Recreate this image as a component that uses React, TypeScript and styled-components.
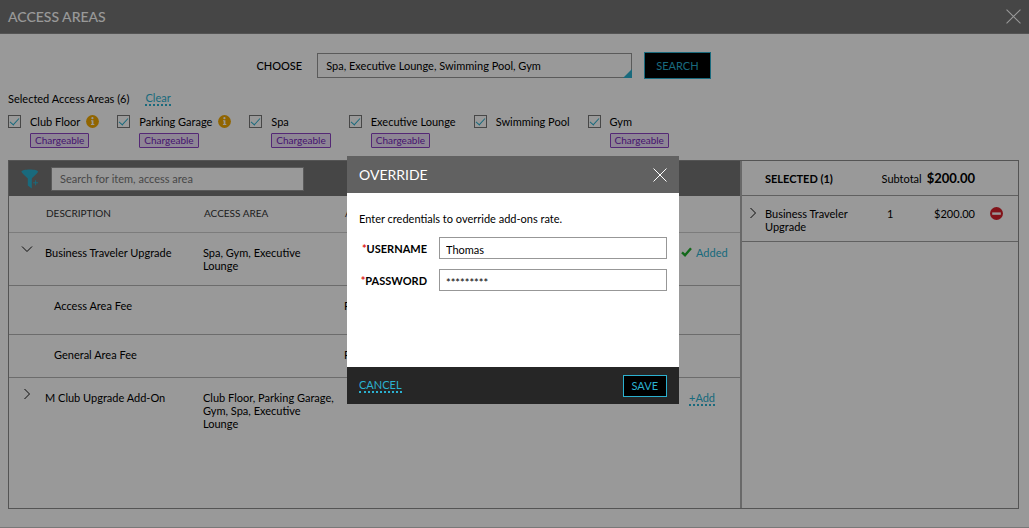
import React from "react";
import styled, { createGlobalStyle } from "styled-components";

const teal = "#2bb1d0";

const GlobalStyle = createGlobalStyle`
  *, *::before, *::after { box-sizing: border-box; }
  body {
    margin: 0;
    background: #fff;
    color: #000;
    font: 400 11px/13px Lato, "Liberation Sans", sans-serif;
  }
  button, input { font: inherit; color: inherit; border-radius: 0; }
  h1, h2, p, ul { margin: 0; padding: 0; }
`;

const Page = styled.div`
  display: flex;
  flex-direction: column;
  min-height: 100vh;
  border-bottom: 1px solid #c8c8c8;
`;

const TitleBar = styled.header`
  display: flex;
  align-items: center;
  justify-content: space-between;
  height: 34px;
  padding: 0 8px;
  background: #757575;
  border-bottom: 1px solid #8c8c8c;
  color: #fff;
`;

const PageTitle = styled.h1`
  font-size: 14px;
  line-height: 16px;
  font-weight: 500;
`;

const IconButton = styled.button`
  display: flex;
  padding: 0;
  border: 0;
  background: none;
  cursor: pointer;
`;

const LinkText = styled.a`
  color: ${teal};
  text-decoration: none;
  border-bottom: 2px dotted ${teal};
  line-height: 13px;
`;

const OutlineButton = styled.button<{ $wide?: boolean }>`
  height: ${(p) => (p.$wide ? 27 : 22)}px;
  padding: 0 ${(p) => (p.$wide ? 11 : 8)}px;
  border: 1px solid ${teal};
  background: #000;
  color: ${teal};
  cursor: pointer;
`;

const ChooseRow = styled.form`
  display: flex;
  align-items: center;
  justify-content: center;
  padding: 18px 62px 0 0;
`;

const ChooseLabel = styled.label`
  margin-right: 15px;
  font-weight: 500;
`;

const ChooseField = styled.div`
  position: relative;
  width: 315px;
  margin-right: 12px;
`;

const TextBox = styled.input<{ $height: number }>`
  display: block;
  width: 100%;
  height: ${(p) => p.$height}px;
  padding: 0 8px;
  border: 1px solid #979797;
  background: #fff;
  outline: none;
  &::placeholder { color: #777; opacity: 1; }
`;

const Corner = styled.span`
  position: absolute;
  right: 0;
  bottom: 0;
  border-bottom: 9px solid ${teal};
  border-left: 9px solid transparent;
`;

const Summary = styled.div`
  display: flex;
  gap: 16px;
  padding: 12px 8px 0;
`;

const SummaryText = styled.span`
  line-height: 15px;
`;

const AreaList = styled.ul`
  display: flex;
  gap: 18px;
  height: 54px;
  padding: 9px 8px 0;
  list-style: none;
`;

const AreaItem = styled.li`
  display: flex;
  flex-direction: column;
  align-items: flex-start;
  gap: 5px;
`;

const AreaLabel = styled.label`
  display: flex;
  align-items: center;
  white-space: nowrap;
`;

const CheckBox = styled.input`
  appearance: none;
  width: 13px;
  height: 13px;
  margin: 0 9px 0 0;
  border: 1px solid #777;
  display: grid;
  place-items: center;
  &:checked::after {
    content: "";
    width: 9px;
    height: 5px;
    margin-top: -2px;
    border: solid ${teal};
    border-width: 0 0 1px 1px;
    transform: rotate(-48deg);
  }
`;

const InfoSlot = styled.span`
  display: flex;
  margin-left: 6px;
`;

const Badge = styled.span`
  margin-left: 22px;
  padding: 0 4px;
  border: 1px solid #8c43c4;
  border-radius: 1px;
  background: #eddff8;
  color: #7425b8;
  font-size: 10px;
`;

const Panel = styled.main`
  display: grid;
  grid-template-columns: minmax(0, 1fr) 278px;
  min-height: 349px;
  margin: 0 10px 18px 8px;
  border: 1px solid #8c8c8c;
`;

const Catalog = styled.section`
  min-width: 0;
`;

const Toolbar = styled.div`
  display: flex;
  align-items: center;
  gap: 12px;
  height: 35px;
  padding-left: 12px;
  background: #757575;
`;

const ToolbarSearch = styled.div`
  width: 253px;
`;

const CatalogTable = styled.table`
  width: 100%;
  table-layout: fixed;
  border-collapse: collapse;
`;

const HeadCell = styled.th`
  height: 36px;
  padding: 0 0 0 1px;
  border-bottom: 1px solid #cfcfcf;
  color: #333;
  font-size: 10px;
  font-weight: 400;
  text-align: left;
`;

const BodyRow = styled.tr<{ $height: number }>`
  height: ${(p) => p.$height}px;
  &:not(:last-child) { border-bottom: 1px solid #b4b4b4; }
`;

const Cell = styled.td<{ $indent?: boolean }>`
  padding: 13px 0 0 ${(p) => (p.$indent ? 9 : 0)}px;
  vertical-align: top;
  white-space: pre-line;
`;

const ToggleCell = styled(Cell)`
  padding: 10px 0 0 12px;
`;

const Added = styled.span`
  display: flex;
  align-items: center;
  gap: 4px;
  color: ${teal};
`;

const AddSlot = styled.span`
  display: inline-block;
  padding-left: 8px;
`;

const Selected = styled.aside`
  border-left: 2px solid #b0b0b0;
`;

const SelectedHead = styled.div`
  display: flex;
  align-items: center;
  height: 35px;
  padding: 0 43px 0 23px;
  border-bottom: 1px solid #a0a0a0;
`;

const SelectedTitle = styled.h2`
  flex: 1;
  font-size: 11px;
  font-weight: 700;
`;

const Subtotal = styled.strong`
  margin-left: 5px;
  font-size: 13px;
  font-weight: 700;
`;

const SelectedRow = styled.div`
  display: grid;
  grid-template-columns: 18px minmax(0, 1fr) 16px 72px 43px;
  align-items: start;
  height: 46px;
  padding: 11px 0 0 5px;
  border-bottom: 1px solid #a0a0a0;
`;

const Price = styled.span`
  text-align: right;
`;

const RemoveButton = styled(IconButton)`
  justify-self: center;
`;

const Backdrop = styled.div`
  position: fixed;
  inset: 0;
  display: flex;
  align-items: center;
  justify-content: center;
  padding: 32px 3px 0 0;
  background: rgba(0, 0, 0, 0.4);
`;

const Dialog = styled.form`
  display: flex;
  flex-direction: column;
  width: 332px;
  min-height: 248px;
  background: #fff;
`;

const DialogHead = styled.div`
  display: flex;
  align-items: center;
  justify-content: space-between;
  height: 37px;
  padding: 0 12px;
  background: #616161;
  color: #fff;
`;

const DialogTitle = styled.h2`
  font-size: 14px;
  line-height: 16px;
  font-weight: 400;
`;

const DialogBody = styled.div`
  flex: 1;
  padding: 19px 12px 0;
`;

const Fields = styled.div`
  display: grid;
  gap: 10px;
  margin-top: 12px;
`;

const Field = styled.div`
  display: grid;
  grid-template-columns: 68px 1fr;
  align-items: center;
  gap: 12px;
`;

const FieldLabel = styled.label`
  font-weight: 700;
  text-align: right;
  white-space: nowrap;
`;

const Required = styled.span`
  color: #e02020;
`;

const CredentialBox = styled(TextBox)<{ $masked?: boolean }>`
  padding: ${(p) => (p.$masked ? 5 : 2)}px 6px 0;
`;

const DialogFoot = styled.div`
  display: flex;
  align-items: center;
  justify-content: space-between;
  height: 37px;
  padding: 0 12px;
  background: #262626;
`;

const CloseIcon = ({ size }: { size: number }) => (
  <svg width={size} height={size} viewBox="0 0 14 14" stroke="#fff" strokeWidth="1" aria-hidden="true">
    <path d="M0.5 0.5L13.5 13.5M13.5 0.5L0.5 13.5" />
  </svg>
);

const Chevron = ({ open }: { open?: boolean }) => (
  <svg width="12" height="12" viewBox="0 0 12 12" fill="none" stroke="#111" strokeWidth="1" aria-hidden="true">
    <path d={open ? "M1 3.5L6 8.5L11 3.5" : "M3.5 1L8.5 6L3.5 11"} />
  </svg>
);

const InfoIcon = () => (
  <svg width="13" height="13" viewBox="0 0 13 13" aria-hidden="true">
    <circle cx="6.5" cy="6.5" r="6.4" fill="#f2a900" />
    <circle cx="6.4" cy="3.2" r="1.1" fill="#fff" />
    <path d="M5 5.2H7.4V9H8.3V10H4.9V9H5.7V6.2H5Z" fill="#fff" />
  </svg>
);

const FilterIcon = () => (
  <svg width="18" height="20" viewBox="0 0 18 20" fill={teal} aria-hidden="true">
    <path d="M0.5 2.6C1 -0.2 16.5 -0.2 17 2.6C17 4 12 8 10.8 9.5V19.5L6.8 16.6V9.5C5.5 8 0.5 4 0.5 2.6Z" />
    <path d="M14.6 11.3V16.3M12.1 13.8H17.1" stroke={teal} strokeWidth="1" />
  </svg>
);

const TickIcon = () => (
  <svg width="11" height="10" viewBox="0 0 11 10" fill="none" stroke="#1fae2c" strokeWidth="2.4" aria-hidden="true">
    <path d="M1 5.4L4 8.2L10 1.2" />
  </svg>
);

const MinusIcon = () => (
  <svg width="13" height="13" viewBox="0 0 13 13" aria-hidden="true">
    <circle cx="6.5" cy="6.5" r="6.5" fill="#d9202b" />
    <rect x="2.2" y="5.4" width="8.6" height="2.4" fill="#fff" />
  </svg>
);

const areas = [
  { name: "Club Floor", info: true, chargeable: true },
  { name: "Parking Garage", info: true, chargeable: true },
  { name: "Spa", info: false, chargeable: true },
  { name: "Executive Lounge", info: false, chargeable: true },
  { name: "Swimming Pool", info: false, chargeable: false },
  { name: "Gym", info: false, chargeable: true },
];

export default function App() {
  return (
    <>
      <GlobalStyle />
      <Page>
        <TitleBar>
          <PageTitle>ACCESS AREAS</PageTitle>
          <IconButton type="button" aria-label="Close">
            <CloseIcon size={15} />
          </IconButton>
        </TitleBar>

        <ChooseRow>
          <ChooseLabel htmlFor="choose">CHOOSE</ChooseLabel>
          <ChooseField>
            <TextBox id="choose" $height={25} defaultValue="Spa, Executive Lounge, Swimming Pool, Gym" />
            <Corner />
          </ChooseField>
          <OutlineButton type="button" $wide>SEARCH</OutlineButton>
        </ChooseRow>

        <Summary>
          <SummaryText>Selected Access Areas (6)</SummaryText>
          <LinkText href="#clear">Clear</LinkText>
        </Summary>

        <AreaList>
          {areas.map((area) => (
            <AreaItem key={area.name}>
              <AreaLabel>
                <CheckBox type="checkbox" defaultChecked />
                {area.name}
                {area.info && <InfoSlot><InfoIcon /></InfoSlot>}
              </AreaLabel>
              {area.chargeable && <Badge>Chargeable</Badge>}
            </AreaItem>
          ))}
        </AreaList>

        <Panel>
          <Catalog>
            <Toolbar>
              <IconButton type="button" aria-label="Filter"><FilterIcon /></IconButton>
              <ToolbarSearch>
                <TextBox $height={24} aria-label="Search" placeholder="Search for item, access area" />
              </ToolbarSearch>
            </Toolbar>
            <CatalogTable>
              <colgroup>
                <col style={{ width: 36 }} />
                <col style={{ width: 158 }} />
                <col style={{ width: 141 }} />
                <col />
                <col style={{ width: 59 }} />
              </colgroup>
              <thead>
                <tr>
                  <HeadCell />
                  <HeadCell>DESCRIPTION</HeadCell>
                  <HeadCell>ACCESS AREA</HeadCell>
                  <HeadCell>A</HeadCell>
                  <HeadCell />
                </tr>
              </thead>
              <tbody>
                <BodyRow $height={53}>
                  <ToggleCell>
                    <IconButton type="button" aria-label="Collapse"><Chevron open /></IconButton>
                  </ToggleCell>
                  <Cell>Business Traveler Upgrade</Cell>
                  <Cell>{"Spa, Gym, Executive\nLounge"}</Cell>
                  <Cell />
                  <Cell><Added><TickIcon />Added</Added></Cell>
                </BodyRow>
                <BodyRow $height={49}>
                  <Cell />
                  <Cell $indent>Access Area Fee</Cell>
                  <Cell />
                  <Cell>Rate</Cell>
                  <Cell />
                </BodyRow>
                <BodyRow $height={43}>
                  <Cell />
                  <Cell $indent>General Area Fee</Cell>
                  <Cell />
                  <Cell>Rate</Cell>
                  <Cell />
                </BodyRow>
                <BodyRow $height={66}>
                  <ToggleCell>
                    <IconButton type="button" aria-label="Expand"><Chevron /></IconButton>
                  </ToggleCell>
                  <Cell>M Club Upgrade Add-On</Cell>
                  <Cell>{"Club Floor, Parking Garage,\nGym, Spa, Executive\nLounge"}</Cell>
                  <Cell />
                  <Cell><AddSlot><LinkText href="#add">+Add</LinkText></AddSlot></Cell>
                </BodyRow>
              </tbody>
            </CatalogTable>
          </Catalog>

          <Selected>
            <SelectedHead>
              <SelectedTitle>SELECTED (1)</SelectedTitle>
              <span>Subtotal</span>
              <Subtotal>$200.00</Subtotal>
            </SelectedHead>
            <SelectedRow>
              <IconButton type="button" aria-label="Expand"><Chevron /></IconButton>
              <span>Business Traveler Upgrade</span>
              <span>1</span>
              <Price>$200.00</Price>
              <RemoveButton type="button" aria-label="Remove"><MinusIcon /></RemoveButton>
            </SelectedRow>
          </Selected>
        </Panel>
      </Page>

      <Backdrop>
        <Dialog role="dialog" aria-modal="true" aria-labelledby="override-title">
          <DialogHead>
            <DialogTitle id="override-title">OVERRIDE</DialogTitle>
            <IconButton type="button" aria-label="Close"><CloseIcon size={14} /></IconButton>
          </DialogHead>
          <DialogBody>
            <p>Enter credentials to override add-ons rate.</p>
            <Fields>
              <Field>
                <FieldLabel htmlFor="username"><Required>*</Required>USERNAME</FieldLabel>
                <CredentialBox id="username" $height={22} defaultValue="Thomas" />
              </Field>
              <Field>
                <FieldLabel htmlFor="password"><Required>*</Required>PASSWORD</FieldLabel>
                <CredentialBox id="password" $height={22} $masked autoComplete="off" defaultValue="*********" />
              </Field>
            </Fields>
          </DialogBody>
          <DialogFoot>
            <LinkText href="#cancel">CANCEL</LinkText>
            <OutlineButton type="button">SAVE</OutlineButton>
          </DialogFoot>
        </Dialog>
      </Backdrop>
    </>
  );
}
